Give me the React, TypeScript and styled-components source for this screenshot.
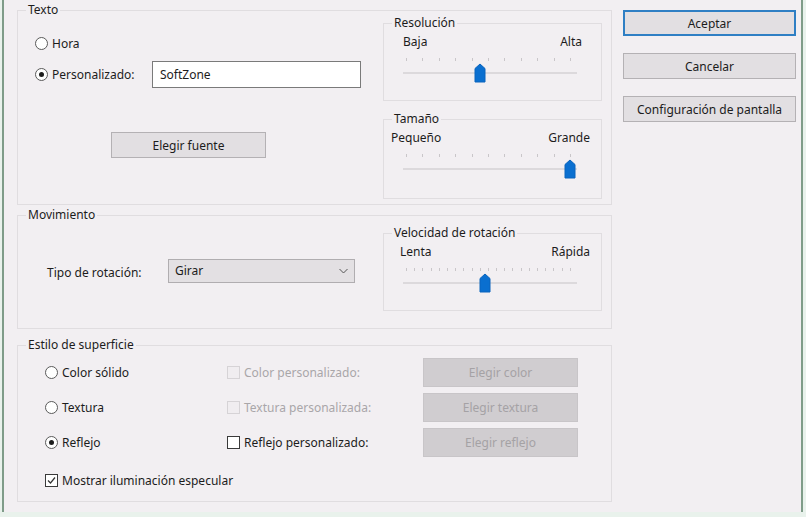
import styled, { createGlobalStyle } from 'styled-components'

const GlobalStyle = createGlobalStyle`
  html, body {
    margin: 0;
    padding: 0;
    background: #e9f2ec;
  }
  body {
    font-family: 'Noto Sans', 'Open Sans', sans-serif;
    font-size: 12px;
    color: #1c1c1c;
  }
`

const Frame = styled.div`
  width: 801px;
  height: 512px;
  margin-left: 2px;
  border-left: 2px solid #7f9c89;
  border-right: 2px solid #7f9c89;
  background: #f2eff2;
  display: flex;
  gap: 11px;
  padding: 10px 0 0 13px;
  box-sizing: border-box;
`

const LeftCol = styled.div`
  width: 595px;
  display: flex;
  flex-direction: column;
`

const RightCol = styled.div`
  width: 173px;
  display: flex;
  flex-direction: column;
  gap: 17px;
`

const Group = styled.div<{ $h: number; $mt?: number }>`
  position: relative;
  height: ${(p) => p.$h}px;
  margin-top: ${(p) => p.$mt || 0}px;
  border: 1px solid #e0dde0;
  box-sizing: border-box;
`

const Legend = styled.span`
  position: absolute;
  top: -9px;
  left: 8px;
  padding: 0 2px;
  line-height: 16px;
  background: #f2eff2;
  white-space: nowrap;
`

const TextoBody = styled.div`
  display: grid;
  grid-template-columns: 1fr 219px;
  height: 100%;
  box-sizing: border-box;
  padding: 12px 9px 6px 17px;
`

const LeftStack = styled.div`
  display: flex;
  flex-direction: column;
`

const OptionRow = styled.div<{ $mt?: number }>`
  display: grid;
  grid-template-columns: 117px 209px;
  align-items: center;
  margin-top: ${(p) => p.$mt || 0}px;
`

const Choice = styled.label<{ $disabled?: boolean }>`
  display: flex;
  align-items: center;
  gap: 4px;
  height: 20px;
  white-space: nowrap;
  color: ${(p) => (p.$disabled ? '#a9a6a9' : '#1c1c1c')};
`

const Radio = styled.span<{ $on?: boolean }>`
  width: 11px;
  height: 11px;
  border: 1px solid #5a5a5a;
  border-radius: 50%;
  background: #fff;
  display: flex;
  align-items: center;
  justify-content: center;
  flex: none;
  &::after {
    content: '';
    width: 5px;
    height: 5px;
    border-radius: 50%;
    background: ${(p) => (p.$on ? '#1c1c1c' : 'transparent')};
  }
`

const Check = styled.span<{ $disabled?: boolean }>`
  width: 11px;
  height: 11px;
  border: 1px solid ${(p) => (p.$disabled ? '#d6d3d6' : '#3a3a3a')};
  background: ${(p) => (p.$disabled ? '#f0edf0' : '#fff')};
  display: flex;
  align-items: center;
  justify-content: center;
  flex: none;
`

const TextInput = styled.div`
  height: 27px;
  box-sizing: border-box;
  border: 1px solid #7a7a7a;
  background: #fff;
  padding: 0 7px;
  display: flex;
  align-items: center;
`

const Button = styled.div<{ $default?: boolean; $disabled?: boolean; $w?: number; $h?: number }>`
  width: ${(p) => (p.$w ? `${p.$w}px` : 'auto')};
  height: ${(p) => p.$h || 26}px;
  box-sizing: border-box;
  display: flex;
  align-items: center;
  justify-content: center;
  white-space: nowrap;
  background: ${(p) => (p.$disabled ? '#d0cdd0' : '#e2dfe2')};
  border: ${(p) =>
    p.$default ? '2px solid #2f7fc4' : p.$disabled ? '1px solid #c8c5c8' : '1px solid #b4b1b4'};
  color: ${(p) => (p.$disabled ? '#a5a2a5' : '#1c1c1c')};
`

const FontButton = styled(Button)`
  margin: 44px 0 0 76px;
`

const SubStack = styled.div`
  display: flex;
  flex-direction: column;
  gap: 18px;
`

const SubBody = styled.div`
  padding-top: 10px;
`

const Ends = styled.div<{ $pl: number; $pr: number }>`
  display: flex;
  justify-content: space-between;
  line-height: 16px;
  padding: 0 ${(p) => p.$pr}px 0 ${(p) => p.$pl}px;
`

const SliderBox = styled.div`
  position: relative;
  width: 174px;
  height: 30px;
  margin: 5px 0 0 19px;
`

const Ticks = styled.div`
  position: absolute;
  top: 3px;
  left: 3px;
  right: 6px;
  display: flex;
  justify-content: space-between;
`

const Tick = styled.span`
  width: 1px;
  height: 3px;
  background: #c9c6c9;
`

const Track = styled.div`
  position: absolute;
  top: 17px;
  left: 0;
  right: 0;
  height: 2px;
  background: #dcd9dc;
`

const Thumb = styled.svg`
  position: absolute;
  top: 8px;
  width: 12px;
  height: 20px;
  margin-left: -6px;
`

const Slider = ({ value, ticks }: { value: number; ticks: number }) => (
  <SliderBox>
    <Ticks>
      {Array.from({ length: ticks }).map((_, i) => (
        <Tick key={i} />
      ))}
    </Ticks>
    <Track />
    <Thumb viewBox="0 0 12 20" style={{ left: `${value * 100}%` }}>
      <path d="M1 5.5 L6 1 L11 5.5 V19 H1 Z" fill="#0a6fd0" stroke="#0a64bd" strokeWidth="1" />
    </Thumb>
  </SliderBox>
)

const MoveBody = styled.div`
  display: flex;
  align-items: center;
  height: 100%;
  box-sizing: border-box;
  padding: 17px 9px 17px 29px;
`

const FieldLabel = styled.span`
  width: 121px;
  white-space: nowrap;
`

const Select = styled.div`
  width: 187px;
  height: 24px;
  box-sizing: border-box;
  border: 1px solid #b0adb0;
  background: #e3e0e3;
  display: flex;
  align-items: center;
  justify-content: space-between;
  padding: 0 6px 0 6px;
  margin-bottom: 3px;
`

const MoveSub = styled(Group)`
  width: 219px;
  margin-left: auto;
`

const StyleBody = styled.div`
  padding: 12px 0 0 27px;
`

const StyleGrid = styled.div`
  display: grid;
  grid-template-columns: 182px 196px 155px;
  grid-auto-rows: 29px;
  row-gap: 6px;
  align-items: center;
`

const Footer = styled.div`
  margin-top: 13px;
`

const CheckMark = () => (
  <svg width="9" height="9" viewBox="0 0 9 9">
    <path d="M1 4.5 L3.5 7 L8 1.5" fill="none" stroke="#333" strokeWidth="1.2" />
  </svg>
)

const Chevron = () => (
  <svg width="9" height="6" viewBox="0 0 9 6">
    <path d="M0.5 1 L4.5 5 L8.5 1" fill="none" stroke="#555" strokeWidth="1" />
  </svg>
)

const App = () => {
  return (
    <>
      <GlobalStyle />
      <Frame>
        <LeftCol>
          <Group $h={195}>
            <Legend>Texto</Legend>
            <TextoBody>
              <LeftStack>
                <OptionRow $mt={10}>
                  <Choice>
                    <Radio />
                    Hora
                  </Choice>
                </OptionRow>
                <OptionRow $mt={8}>
                  <Choice>
                    <Radio $on />
                    Personalizado:
                  </Choice>
                  <TextInput>SoftZone</TextInput>
                </OptionRow>
                <FontButton $w={155}>Elegir fuente</FontButton>
              </LeftStack>
              <SubStack>
                <Group $h={78}>
                  <Legend>Resolución</Legend>
                  <SubBody>
                    <Ends $pl={19} $pr={19}>
                      <span>Baja</span>
                      <span>Alta</span>
                    </Ends>
                    <Slider value={0.44} ticks={11} />
                  </SubBody>
                </Group>
                <Group $h={80}>
                  <Legend>Tamaño</Legend>
                  <SubBody>
                    <Ends $pl={7} $pr={11}>
                      <span>Pequeño</span>
                      <span>Grande</span>
                    </Ends>
                    <Slider value={0.96} ticks={11} />
                  </SubBody>
                </Group>
              </SubStack>
            </TextoBody>
          </Group>

          <Group $h={114} $mt={10}>
            <Legend>Movimiento</Legend>
            <MoveBody>
              <FieldLabel>Tipo de rotación:</FieldLabel>
              <Select>
                <span>Girar</span>
                <Chevron />
              </Select>
              <MoveSub $h={78}>
                <Legend>Velocidad de rotación</Legend>
                <SubBody>
                  <Ends $pl={16} $pr={11}>
                    <span>Lenta</span>
                    <span>Rápida</span>
                  </Ends>
                  <Slider value={0.47} ticks={21} />
                </SubBody>
              </MoveSub>
            </MoveBody>
          </Group>

          <Group $h={157} $mt={16}>
            <Legend>Estilo de superficie</Legend>
            <StyleBody>
              <StyleGrid>
                <Choice>
                  <Radio />
                  Color sólido
                </Choice>
                <Choice $disabled>
                  <Check $disabled />
                  Color personalizado:
                </Choice>
                <Button $disabled $h={29}>Elegir color</Button>
                <Choice>
                  <Radio />
                  Textura
                </Choice>
                <Choice $disabled>
                  <Check $disabled />
                  Textura personalizada:
                </Choice>
                <Button $disabled $h={29}>Elegir textura</Button>
                <Choice>
                  <Radio $on />
                  Reflejo
                </Choice>
                <Choice>
                  <Check />
                  Reflejo personalizado:
                </Choice>
                <Button $disabled $h={29}>Elegir reflejo</Button>
              </StyleGrid>
              <Footer>
                <Choice>
                  <Check>
                    <CheckMark />
                  </Check>
                  Mostrar iluminación especular
                </Choice>
              </Footer>
            </StyleBody>
          </Group>
        </LeftCol>

        <RightCol>
          <Button $default>Aceptar</Button>
          <Button>Cancelar</Button>
          <Button>Configuración de pantalla</Button>
        </RightCol>
      </Frame>
    </>
  )
}

export default App
